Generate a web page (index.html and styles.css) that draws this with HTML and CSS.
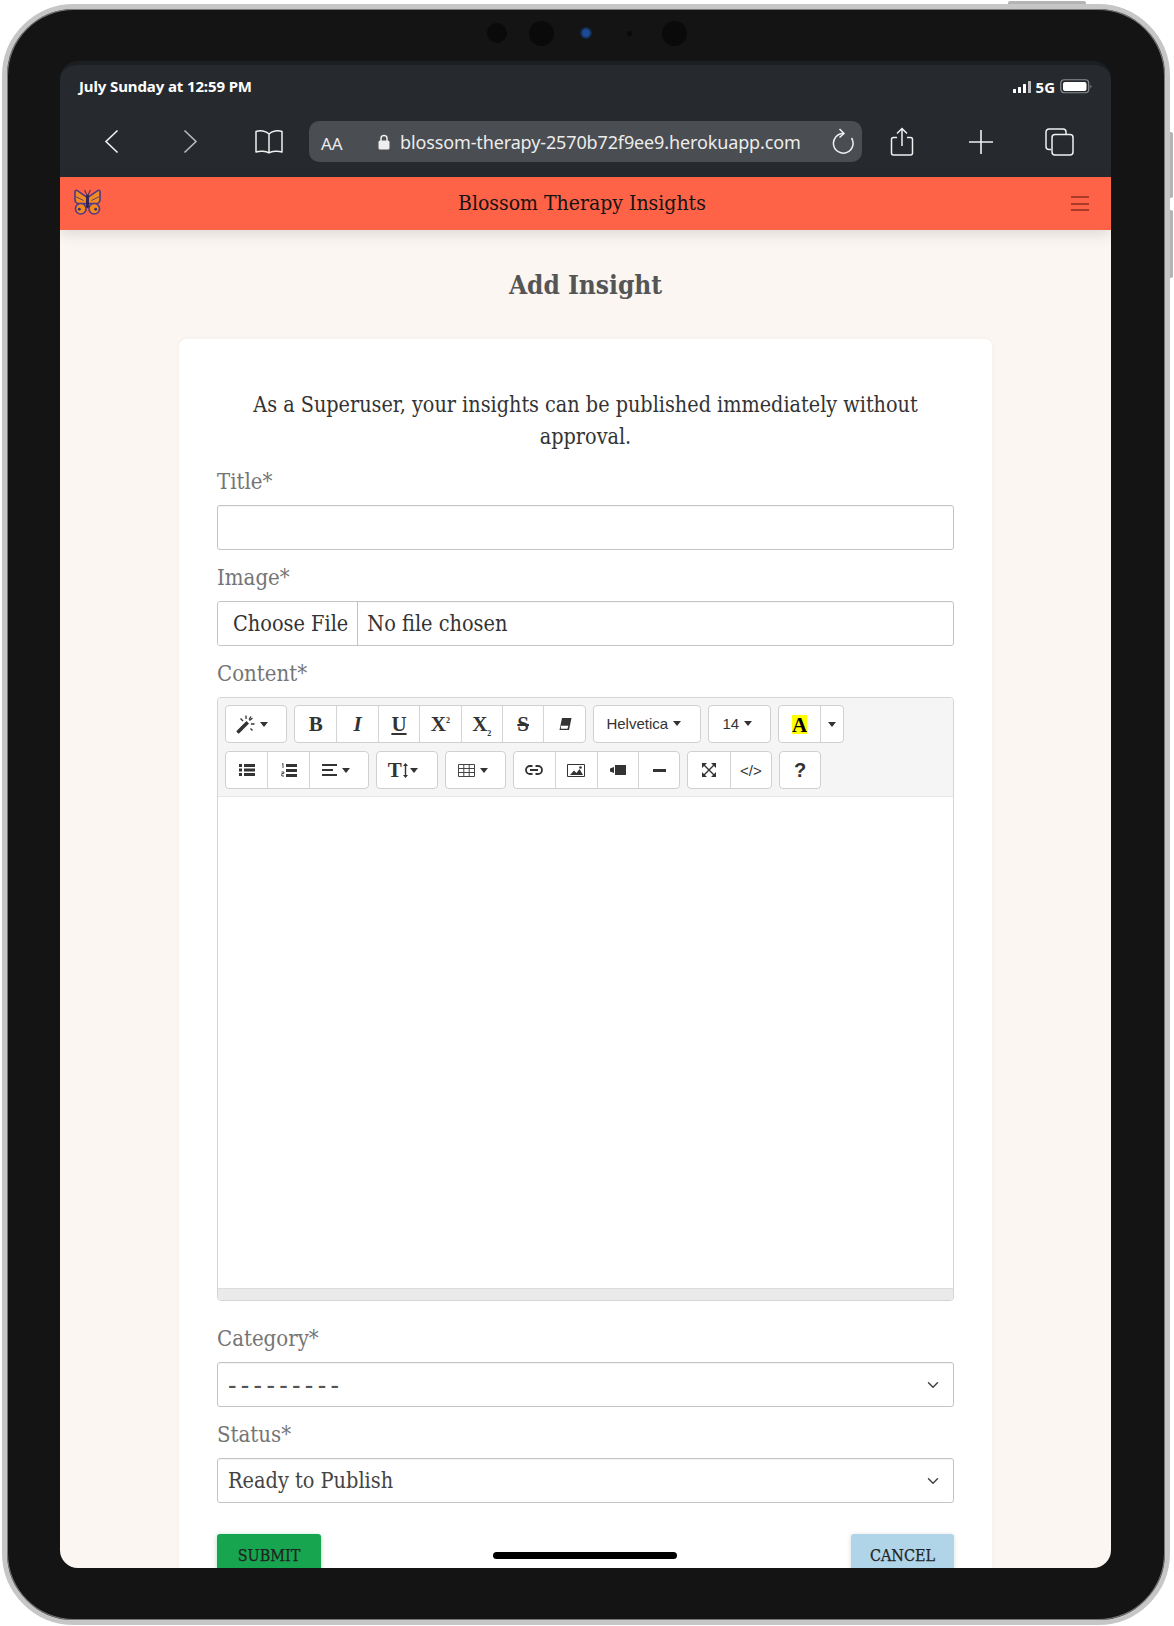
FILE: index.html
```html
<!DOCTYPE html>
<html lang="en">
<head>
<meta charset="utf-8">
<title>Add Insight</title>
<link rel="stylesheet" href="styles.css">
</head>
<body>
<span class="hw hw-top"></span>
<span class="hw hw-side1"></span>
<span class="hw hw-side2"></span>
<div class="device">
  <div class="bezel-top">
    <span class="cam cam-a"></span>
    <span class="cam cam-b"></span>
    <span class="cam cam-lens"></span>
    <span class="cam cam-dot"></span>
    <span class="cam cam-c"></span>
  </div>
  <div class="screen">
    <div class="status-row">
      <span class="clock">July Sunday at 12:59 PM</span>
      <span class="status-right">
        <svg class="signal" width="18" height="12" viewBox="0 0 18 12"><rect x="0" y="8" width="3" height="4" fill="#fff" rx=".5"/><rect x="5" y="6" width="3" height="6" fill="#fff" rx=".5"/><rect x="10" y="3" width="3" height="9" fill="#fff" rx=".5"/><rect x="15" y="0" width="3" height="12" fill="#bbb" rx=".5"/></svg>
        <span class="net">5G</span>
        <svg width="32" height="15" viewBox="0 0 32 15"><rect x=".75" y=".75" width="28" height="13" rx="3.5" fill="none" stroke="#8a8d90" stroke-width="1.2"/><rect x="3" y="3" width="23.5" height="9" rx="2" fill="#fff"/><path d="M30.5 5.5l1 2-1 2z" fill="#999"/></svg>
      </span>
    </div>
    <div class="browser-bar">
      <span class="cell"><svg width="15" height="25" viewBox="0 0 15 25"><path d="M13.5 1.5L2 12.5l11.5 11" fill="none" stroke="#f0f0f0" stroke-width="1.6"/></svg></span>
      <span class="cell"><svg width="15" height="25" viewBox="0 0 15 25"><path d="M1.5 1.5L13 12.5 1.5 23.5" fill="none" stroke="#b9b9b9" stroke-width="1.6"/></svg></span>
      <span class="cell book"><svg width="30" height="26" viewBox="0 0 30 26"><path d="M15 5C12 1.800 6 1.200 2 2.500V23c4-1.300 10-1 13 1 3-2 9-2.300 13-1V2.500C24 1.200 18 1.800 15 5zM15 5v19" fill="none" stroke="#f0f0f0" stroke-width="1.5" stroke-linejoin="round"/></svg></span>
      <div class="url-bar">
        <span class="aa">AA</span>
        <svg class="lock" width="12" height="16" viewBox="0 0 12 16"><path d="M3 7V4.500a3 3 0 0 1 6 0V7" fill="none" stroke="#eee" stroke-width="1.500"/><rect x="0.500" y="6.500" width="11" height="9" rx="1.500" fill="#eee"/></svg>
        <span class="url">blossom-therapy-2570b72f9ee9.herokuapp.com</span>
        <svg class="reload" width="22" height="26" viewBox="0 0 22 26"><path d="M11 5.500A9.800 9.800 0 1 0 19.500 10" fill="none" stroke="#f0f0f0" stroke-width="1.500"/><path d="M7.500 1l4.500 4.500-4.500 4" fill="none" stroke="#f0f0f0" stroke-width="1.500"/></svg>
      </div>
      <span class="cell"><svg width="24" height="30" viewBox="0 0 24 30"><path d="M7 10.500H3.500a2 2 0 0 0-2 2V26a2 2 0 0 0 2 2h17a2 2 0 0 0 2-2V12.500a2 2 0 0 0-2-2H17M12 19V1.500M7 6.500l5-5 5 5" fill="none" stroke="#f0f0f0" stroke-width="1.500"/></svg></span>
      <span class="cell"><svg width="24" height="24" viewBox="0 0 24 24"><path d="M12 0v24M0 12h24" stroke="#f0f0f0" stroke-width="1.600"/></svg></span>
      <span class="cell"><svg width="29" height="28" viewBox="0 0 29 28"><path d="M6 21.500H4a3 3 0 0 1-3-3V4a3 3 0 0 1 3-3h14a3 3 0 0 1 3 3v2" fill="none" stroke="#f0f0f0" stroke-width="1.500"/><rect x="7" y="6.500" width="21" height="20.500" rx="3" fill="none" stroke="#f0f0f0" stroke-width="1.500"/></svg></span>
    </div>
    <nav class="navbar">
      <svg class="logo" width="27" height="26" viewBox="0 0 28 27">
        <path d="M14 9L3 1.500C2 1 1 1.500 1 3v8c0 2 1 3.500 3 4h10z" fill="#f58a1f" stroke="#503a88" stroke-width="1.700" stroke-linejoin="round"/>
        <path d="M14 9l11-7.500c1-.5 2 0 2 1.500v8c0 2-1 3.500-3 4H14z" fill="#f58a1f" stroke="#503a88" stroke-width="1.700" stroke-linejoin="round"/>
        <circle cx="7" cy="20.500" r="5.500" fill="#f58a1f" stroke="#503a88" stroke-width="1.700"/>
        <circle cx="21" cy="20.500" r="5.500" fill="#f58a1f" stroke="#503a88" stroke-width="1.700"/>
        <circle cx="5.500" cy="21" r="1.500" fill="#3c2d70"/><circle cx="22.500" cy="21" r="1.500" fill="#3c2d70"/>
        <path d="M2 8l8 4M26 8l-8 4" stroke="#503a88" stroke-width="1"/>
        <rect x="12.500" y="6" width="3" height="14" rx="1.500" fill="#2f2358"/>
        <path d="M13.500 6.500L11 1M14.500 6.500L17 1" stroke="#2f2358" stroke-width="1" fill="none"/>
      </svg>
      <span class="brand">Blossom Therapy Insights</span>
      <span class="burger"><i></i><i></i><i></i></span>
    </nav>
    <main class="page">
      <h1 class="page-title">Add Insight</h1>
      <section class="card">
        <p class="lead">As a Superuser, your insights can be published immediately without approval.</p>
        <form class="form">
          <div class="field">
            <label class="field-label" for="title">Title*</label>
            <input class="control" id="title" type="text">
          </div>
          <div class="field">
            <label class="field-label" for="image">Image*</label>
            <input class="control control-file" id="image" type="file">
          </div>
          <div class="field field-editor">
            <label class="field-label">Content*</label>
            <div class="editor">
              <div class="toolbar">
                <div class="tool-row">
                  <div class="group">
                    <span class="btn w-magic"><svg width="19" height="19" viewBox="0 0 19 19"><path d="M.8 15.700L10.500 6l2.500 2.500-9.700 9.700a1 1 0 0 1-1.400 0l-1.100-1.100a1 1 0 0 1 0-1.400z" fill="#333"/><path d="M10 .5v3.500M18.500 9H15M4.500 3.500L7 6M15 1.500L13 4.500M14.500 13.500L16.500 15.500M13.500 5.500L16.500 3" stroke="#333" stroke-width="1.300" fill="none"/></svg><i class="caret"></i></span>
                  </div>
                  <div class="group">
                    <span class="btn w-42 glyph">B</span>
                    <span class="btn w-42 glyph glyph-i">I</span>
                    <span class="btn w-42 glyph glyph-u">U</span>
                    <span class="btn w-42 glyph"><span>X<sup class="mini">2</sup></span></span>
                    <span class="btn w-42 glyph"><span>X<sub class="mini">2</sub></span></span>
                    <span class="btn w-42 glyph"><s class="strike">S</s></span>
                    <span class="btn w-42"><svg width="14" height="14" viewBox="0 0 14 14"><path d="M4 1h9.500l-2.500 12H1.500z" fill="#333"/><path d="M2.800 8.800h7.500l-.8 3H2.900z" fill="#fff"/></svg></span>
                  </div>
                  <div class="group"><span class="btn w-font sans">Helvetica<i class="caret"></i></span></div>
                  <div class="group"><span class="btn w-size sans">14<i class="caret"></i></span></div>
                  <div class="group">
                    <span class="btn w-42"><span class="hl">A</span></span>
                    <span class="btn w-23"><i class="caret caret-only"></i></span>
                  </div>
                </div>
                <div class="tool-row">
                  <div class="group">
                    <span class="btn w-42"><svg width="16" height="12" viewBox="0 0 16 12"><path d="M0 0h3v3H0zM5 0h11v3H5zM0 4.500h3v3H0zM5 4.500h11v3H5zM0 9h3v3H0zM5 9h11v3H5z" fill="#333"/></svg></span>
                    <span class="btn w-42"><svg width="16" height="15" viewBox="0 0 16 15"><path d="M5 1h11v3H5zM5 6h11v3H5zM5 11h11v3H5z" fill="#333"/><path d="M1 1l1-.5V5M.500 9h2.300v1.500H.800V13h2.200" fill="none" stroke="#333" stroke-width=".9"/></svg></span>
                    <span class="btn w-59 pad-r"><svg width="15" height="12" viewBox="0 0 15 12"><path d="M0 0h15v2H0zM0 5h11v2H0zM0 10h15v2H0z" fill="#333"/></svg><i class="caret"></i></span>
                  </div>
                  <div class="group">
                    <span class="btn w-60 glyph pad-r-wide">T<svg class="updown" width="5" height="15" viewBox="0 0 5 15"><path d="M2.500 0L5 3H3.200v9H5l-2.500 3L0 12h1.800V3H0z" fill="#333"/></svg><i class="caret caret-tight"></i></span>
                  </div>
                  <div class="group">
                    <span class="btn w-59 pad-r-small"><svg width="17" height="13" viewBox="0 0 17 13"><path d="M.5.5h16v12H.5zM.5 4.500h16M.5 8.500h16M5.800.5v12M11.200.5v12" fill="none" stroke="#444" stroke-width="1"/></svg><i class="caret"></i></span>
                  </div>
                  <div class="group">
                    <span class="btn w-42"><svg width="18" height="10" viewBox="0 0 18 10"><path d="M7.500 1H5a4 4 0 0 0 0 8h2.500M10.500 1H13a4 4 0 0 1 0 8h-2.500M5 5h8" fill="none" stroke="#333" stroke-width="1.800"/></svg></span>
                    <span class="btn w-42"><svg width="18" height="13" viewBox="0 0 18 13"><path d="M.5.5h17v12H.5z" fill="#fff" stroke="#333"/><path d="M3 11l4-4.500 2.500 2.500 3-4L16 11z" fill="#333"/><circle cx="13.500" cy="3.500" r="1.300" fill="#333"/></svg></span>
                    <span class="btn w-42"><svg width="16" height="10" viewBox="0 0 16 10"><rect x="5" y="0" width="11" height="10" fill="#333"/><path d="M0 3.500L4 2v6L0 6.500z" fill="#333"/></svg></span>
                    <span class="btn w-42"><svg width="13" height="3" viewBox="0 0 13 3"><rect width="13" height="3" fill="#333"/></svg></span>
                  </div>
                  <div class="group">
                    <span class="btn w-42"><svg width="14" height="14" viewBox="0 0 14 14"><path d="M0 0h5L3.500 1.500 0 5zM14 0H9l1.500 1.500L14 5zM0 14h5l-1.500-1.500L0 9zM14 14H9l1.500-1.500L14 9z" fill="#333"/><path d="M2 2l10 10M12 2L2 12" stroke="#333" stroke-width="1.400"/></svg></span>
                    <span class="btn w-42 sans code">&lt;/&gt;</span>
                  </div>
                  <div class="group"><span class="btn w-41 help">?</span></div>
                </div>
              </div>
              <div class="editable"></div>
              <div class="resizer"></div>
            </div>
          </div>
          <div class="field">
            <label class="field-label" for="category">Category*</label>
            <select class="control control-select dashes" id="category"><option>---------</option></select>
          </div>
          <div class="field">
            <label class="field-label" for="status">Status*</label>
            <select class="control control-select" id="status"><option>Ready to Publish</option></select>
          </div>
          <div class="actions">
            <button class="action action-submit" type="button">SUBMIT</button>
            <button class="action action-cancel" type="button">CANCEL</button>
          </div>
        </form>
      </section>
    </main>
    <span class="home-indicator"></span>
  </div>
</div>
</body>
</html>
```

FILE: styles.css
```css
* { box-sizing: border-box; }
html, body { margin: 0; height: 1626px; overflow: hidden; background: #fff; }
body { position: relative; font-family: "DejaVu Serif Condensed", "DejaVu Serif", serif; }

.hw { position: absolute; background: #b4b4b4; }
.hw-top { left: 1008px; top: 1px; width: 78px; height: 4px; border-radius: 2px 2px 0 0; }
.hw-side1 { left: 1170px; top: 132px; width: 3px; height: 66px; border-radius: 0 2px 2px 0; }
.hw-side2 { left: 1170px; top: 210px; width: 3px; height: 68px; border-radius: 0 2px 2px 0; }

.device {
  position: relative;
  margin: 4px 0 0 2px;
  width: 1168px;
  height: 1621px;
  border: 5px solid #c6c6c6;
  border-radius: 72px;
  background: #141414;
  box-shadow: inset 0 0 0 1px #777;
  padding: 0 54px 0 53px;
}
.bezel-top { display: flex; align-items: center; height: 52px; padding-bottom: 4px; }
.cam { display: block; border-radius: 50%; background: #0a0a0a; flex: none; }
.cam-a { width: 20px; height: 20px; margin-left: 427px; }
.cam-b { width: 25px; height: 25px; margin-left: 22px; }
.cam-lens { width: 12px; height: 12px; margin-left: 26px; background: radial-gradient(circle, #1c4a94 35%, #0c1a30 75%); }
.cam-dot { width: 5px; height: 5px; margin-left: 35px; }
.cam-c { width: 25px; height: 25px; margin-left: 30px; }

.screen {
  position: relative;
  height: 1507px;
  border-radius: 18px;
  border-top: 4px solid #1b1f21;
  background: #262a2e;
  overflow: hidden;
  display: flex;
  flex-direction: column;
}

.status-row { display: flex; justify-content: space-between; align-items: center; height: 41px; padding: 0 19px 0 19px; flex: none; }
.clock { font: 700 15px "Noto Sans", sans-serif; color: #fff; letter-spacing: -.12px; }
.status-right { display: flex; align-items: center; gap: 5px; padding-top: 2px; }
.net { font: 700 15px "Noto Sans", sans-serif; color: #fff; }

.browser-bar { display: flex; align-items: center; padding: 15px 0 15px 12px; flex: none; }
.cell { width: 79px; display: flex; justify-content: center; align-items: center; flex: none; }
.book { padding-right: 2px; }
.url-bar { width: 553px; height: 41px; background: #4a4d52; border-radius: 10px; display: flex; align-items: center; color: #ececec; font-family: "Noto Sans", sans-serif; flex: none; }
.aa { font-size: 17px; margin-left: 12px; width: 57px; padding-top: 4px; }
.lock { flex: none; }
.url { font-size: 18px; margin-left: 10px; white-space: nowrap; letter-spacing: -.13px; width: 432px; }
.reload { flex: none; margin-top: -2px; }

.navbar { position: relative; z-index: 1; height: 53px; background: #ff6347; display: flex; align-items: center; padding: 0 22px 0 14px; box-shadow: 0 4px 14px rgba(0,0,0,.12); flex: none; }
.logo { flex: none; margin-top: -4px; }
.brand { font-size: 21px; color: #141414; margin-left: 357px; padding-bottom: 2px; white-space: nowrap; }
.burger { display: flex; flex-direction: column; gap: 4.500px; width: 18px; flex: none; margin-left: auto; }
.burger i { display: block; height: 2px; background: #a93a28; }

.page { background: #fbf6f2; flex: 1; padding: 34px 119px 0 119px; }
.page-title { margin: 0 0 33px; font-size: 26px; line-height: 42px; font-weight: 700; text-align: center; color: #555; }
.card { background: #fff; border-radius: 7px; box-shadow: 0 0 4px rgba(0,0,0,.04); padding: 50px 38px 0; height: 1300px; }
.lead { margin: 0 0 12px; font-size: 21.4px; line-height: 32px; text-align: center; color: #333; padding: 0 24px; }

.field { margin-bottom: 11px; }
.field-label { display: block; height: 32px; margin-bottom: 8px; font-size: 22px; line-height: 34px; color: #757575; }
.control { display: block; width: 100%; height: 45px; border: 1px solid #c4c4c4; border-radius: 3px; background: #fff; font: inherit; font-size: 21.5px; color: #444; padding: 0 10px; box-shadow: inset 0 1px 1px rgba(0,0,0,.04); }
.control-file { padding: 0; line-height: 43px; color: #333; }
.control-file::file-selector-button { height: 43px; margin: 0 9px 0 0; padding: 0 9px 0 15px; border: 0; border-right: 1px solid #c4c4c4; background: #fff; font: inherit; color: #333; }
.control-select { appearance: none; -webkit-appearance: none; background-repeat: no-repeat; background-position: right 12px center; background-size: 16px 12px; background-image: url("data:image/svg+xml,%3Csvg xmlns='http://www.w3.org/2000/svg' viewBox='0 0 16 16'%3E%3Cpath fill='none' stroke='%23444' stroke-linecap='round' stroke-linejoin='round' stroke-width='2' d='M2 5l6 6 6-6'/%3E%3C/svg%3E"); }
.dashes { font-size: 28px; letter-spacing: 4.300px; color: #555; }

.field-editor { margin-bottom: 21px; }
.editor { border: 1px solid #d4d4d4; border-radius: 4px; overflow: hidden; }
.toolbar { background: #f5f5f5; height: 99px; padding: 7px 7px 0; border-bottom: 1px solid #e6e6e6; display: flex; flex-direction: column; gap: 8px; }
.tool-row { display: flex; gap: 7px; height: 38px; }
.group { display: flex; border: 1px solid #d0d0d0; border-radius: 4px; background: #fff; overflow: hidden; }
.btn { display: flex; align-items: center; justify-content: center; height: 100%; border-left: 1px solid #d4d4d4; color: #333; }
.btn:first-child { border-left: 0; }
.w-42 { width: 41.4px; }
.w-41 { width: 40px; }
.w-23 { width: 23px; }
.w-59 { width: 59px; }
.w-60 { width: 60px; }
.w-magic { width: 60px; padding-right: 8px; }
.w-font { width: 106px; padding-right: 6px; }
.w-size { width: 61px; padding-right: 4px; }
.pad-r { padding-right: 6px; }
.pad-r-wide { padding-right: 8px; }
.pad-r-small { padding-right: 4px; }
.sans { font: 15px "Liberation Sans", sans-serif; padding-bottom: 2px; }
.glyph { font: 700 21px "Liberation Serif", serif; color: #333; }
.glyph-i { font-style: italic; }
.glyph-u { text-decoration: underline; text-underline-offset: 2px; }
.strike { text-decoration: line-through; }
.mini { font-size: 8px; line-height: 0; }
.caret { display: inline-block; width: 0; height: 0; margin-left: 5px; border: 4px solid transparent; border-top: 5px solid #333; border-bottom: 0; }
.caret-only { margin-left: 0; }
.caret-tight { margin-left: 2px; }
.hl { display: block; width: 15px; height: 19px; background: #ff0; color: #000; font: 700 21px/20px "Liberation Serif", serif; text-align: center; }
.updown { margin-left: 1px; }
.code { font-size: 15px; padding-bottom: 0; padding-right: 0; }
.help { font: 700 20px "Liberation Sans", sans-serif; }
.editable { height: 491px; background: #fff; }
.resizer { height: 12px; background: #eaeaea; border-top: 1px solid #ddd; }

.actions { display: flex; justify-content: space-between; margin-top: 31px; }
.action { height: 42px; border: 0; border-radius: 3px; font-size: 16px; font-family: inherit; color: #222; padding: 0; -webkit-text-stroke: .25px #222; }
.action-submit { width: 104px; background: #17a64f; box-shadow: 0 1px 5px rgba(23,166,79,.35); }
.action-cancel { width: 103px; background: #b0d4e8; box-shadow: 0 1px 5px rgba(0,0,0,.15); }

.home-indicator { position: absolute; left: 433px; top: 1487px; width: 184px; height: 7px; border-radius: 4px; background: #000; }
```
